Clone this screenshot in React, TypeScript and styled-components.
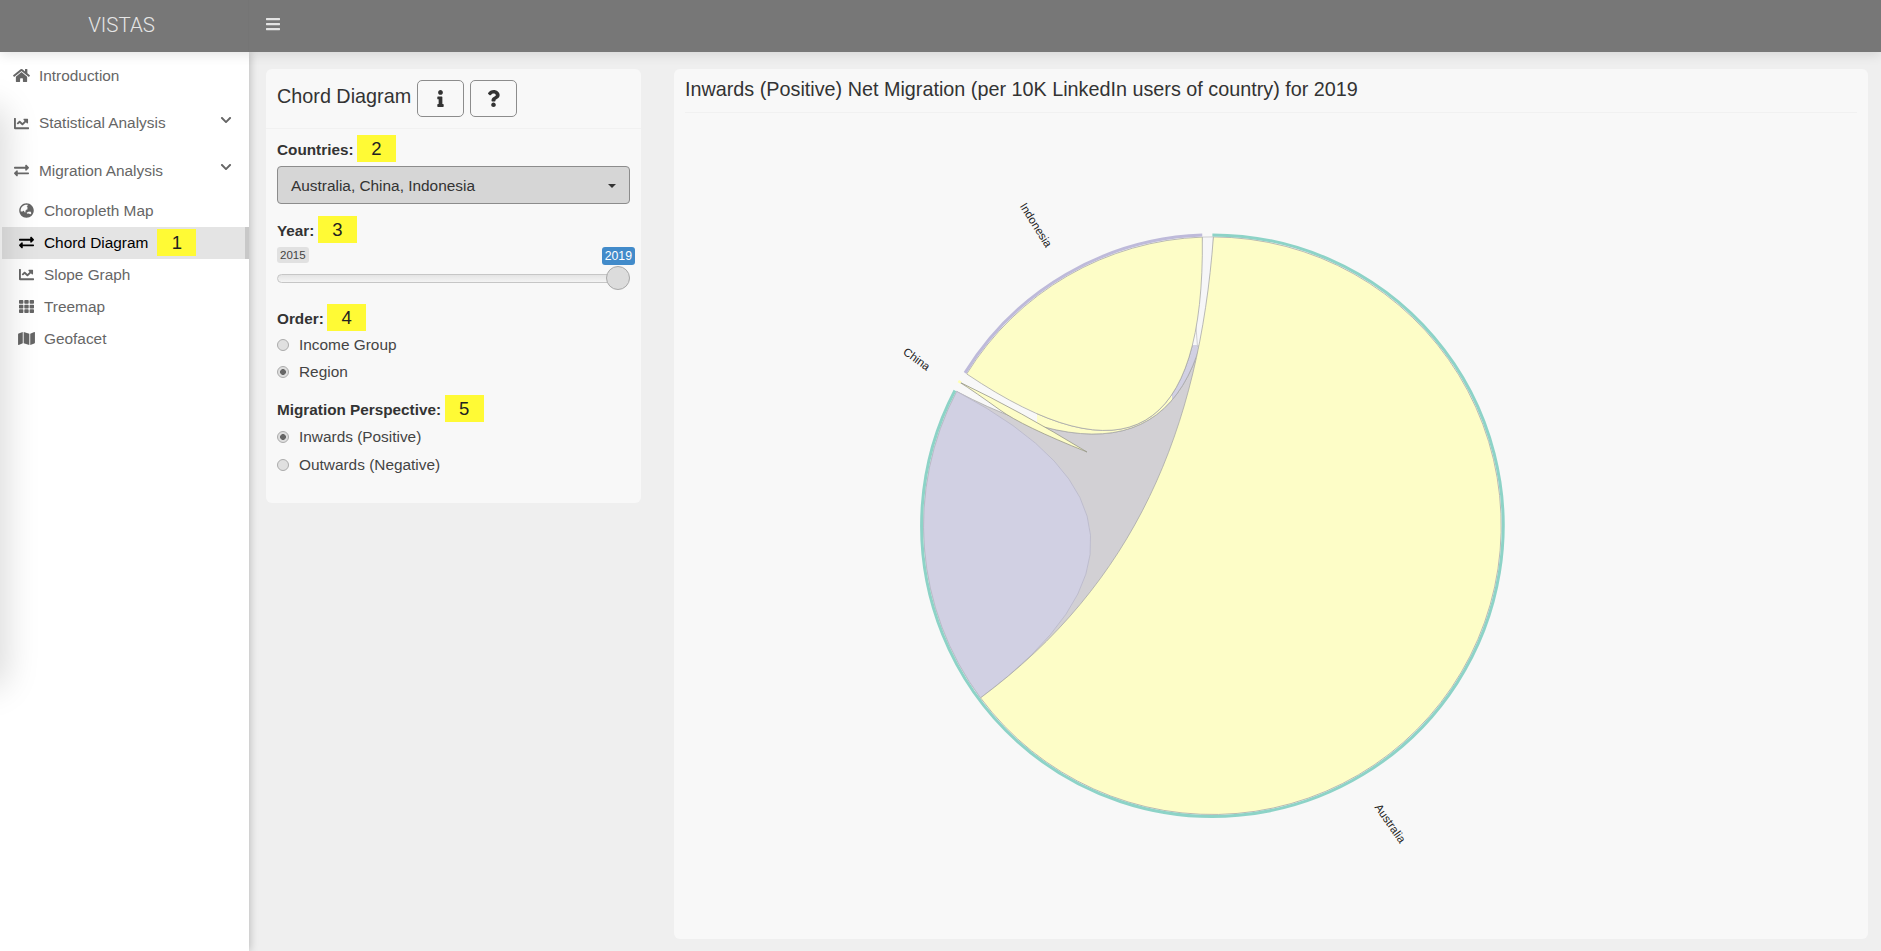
import React from "react";
import styled, { createGlobalStyle } from "styled-components";
import {
  FaBars,
  FaChartLine,
  FaChevronDown,
  FaExchangeAlt,
  FaGlobeAsia,
  FaHome,
  FaInfo,
  FaMap,
  FaQuestion,
  FaTh,
} from "react-icons/fa";

const GlobalStyle = createGlobalStyle`
  html, body { margin: 0; padding: 0; height: 100%; overflow: hidden; }
  body { font-family: "Liberation Sans", Arial, sans-serif; color: #333; background: #efefef; }
  * { box-sizing: border-box; }
`;

const Page = styled.div`
  width: 100%;
  height: 100vh;
  display: flex;
  flex-direction: column;
`;

const TopBar = styled.header`
  flex: none;
  height: 52px;
  display: flex;
  background: #777;
  position: relative;
  z-index: 3;
  box-shadow: 0 2px 12px rgba(0, 0, 0, 0.12);
`;

const Brand = styled.div`
  width: 249px;
  display: flex;
  align-items: center;
  justify-content: center;
  padding: 0 5px 3px 0;
  font-family: Roboto, "Liberation Sans", sans-serif;
  font-weight: 300;
  font-size: 20.5px;
  color: #e6e6e6;
  border-right: 1px solid #757575;
`;

const MenuToggle = styled.div`
  display: flex;
  align-items: center;
  padding: 0 0 4px 16px;
  color: #e4e4e4;
  font-size: 16px;
`;

const Content = styled.div`
  flex: 1;
  display: flex;
  min-height: 0;
`;

const Sidebar = styled.nav`
  flex: none;
  width: 249px;
  background: #fff;
  position: relative;
  z-index: 2;
  overflow: hidden;
  box-shadow: 1px 0 8px rgba(0, 0, 0, 0.22);
`;

const EdgeShade = styled.div`
  position: absolute;
  left: -30px;
  top: 60px;
  width: 30px;
  height: 570px;
  border-radius: 10px;
  box-shadow: 0 0 34px 6px rgba(0, 0, 0, 0.15);
`;

const TopItem = styled.div`
  position: relative;
  height: 47.5px;
  display: flex;
  align-items: center;
  padding-left: 12px;
  font-size: 15.4px;
  color: #666;
  svg.lead {
    width: 19px;
    height: 15px;
    margin-right: 8px;
    flex: none;
  }
`;

const Chevron = styled(FaChevronDown)`
  position: absolute;
  right: 17px;
  top: 14px;
  width: 12px;
  height: 12px;
`;

const SubItem = styled.div<{ $active?: boolean }>`
  height: 32px;
  display: flex;
  align-items: center;
  padding-left: ${(p) => (p.$active ? 16 : 18)}px;
  margin-left: ${(p) => (p.$active ? 2 : 0)}px;
  font-size: 15.4px;
  color: ${(p) => (p.$active ? "#000" : "#666")};
  background: ${(p) => (p.$active ? "#e4e4e4" : "transparent")};
  border-right: ${(p) => (p.$active ? "4px solid #c8c8c8" : "none")};
  svg {
    width: 17px;
    height: 15px;
    margin-right: 9px;
    flex: none;
  }
`;

const Marker = styled.span<{ $gap?: number }>`
  display: inline-flex;
  align-items: center;
  justify-content: center;
  width: 39px;
  height: 27px;
  margin-left: ${(p) => p.$gap ?? 3.5}px;
  background: #fffa35;
  color: #222;
  font-size: 18.5px;
  font-weight: 400;
`;

const Main = styled.main`
  flex: 1;
  display: grid;
  grid-template-columns: 375px 1194px;
  column-gap: 33px;
  align-items: start;
  padding: 17px 0 0 17px;
`;

const Panel = styled.section<{ $height: number }>`
  height: ${(p) => p.$height}px;
  background: #f8f8f8;
  border-radius: 6px;
  display: flex;
  flex-direction: column;
`;

const ControlsHead = styled.div`
  height: 60px;
  flex: none;
  display: flex;
  align-items: center;
  padding: 0 11px;
  border-bottom: 1px solid #f1f1f1;
`;

const ControlsTitle = styled.h2`
  margin: 0 6px 5px 0;
  font-size: 19.8px;
  font-weight: 400;
  color: #333;
`;

const IconButton = styled.div`
  width: 47px;
  height: 37px;
  margin: 0 6px 0 0;
  display: flex;
  align-items: center;
  justify-content: center;
  background: #f8f8f8;
  border: 1px solid #8c8c8c;
  border-radius: 5px;
  color: #333;
  svg {
    width: 17px;
    height: 17px;
  }
`;

const ControlsBody = styled.div`
  padding: 6px 11px 0;
`;

const FieldLabel = styled.div<{ $top?: number }>`
  display: flex;
  align-items: center;
  height: 27px;
  padding-top: 2px;
  margin-top: ${(p) => p.$top ?? 0}px;
  font-size: 15.3px;
  font-weight: 700;
  color: #333;
  & > span {
    margin-top: -2px;
  }
`;

const Select = styled.div`
  height: 38px;
  margin: 4px 0 0;
  width: 353px;
  display: flex;
  align-items: center;
  justify-content: space-between;
  padding: 1px 13px 0 13px;
  background: #d6d6d6;
  border: 1px solid #8c8c8c;
  border-radius: 4px;
  font-size: 15.4px;
  color: #333;
`;

const Caret = styled.span`
  width: 0;
  height: 0;
  border-left: 4.5px solid transparent;
  border-right: 4.5px solid transparent;
  border-top: 4.5px solid #333;
`;

const SliderLabels = styled.div`
  display: flex;
  justify-content: space-between;
  align-items: flex-start;
  margin: 4px -5px 0 0;
  height: 18px;
`;

const MinLabel = styled.span`
  padding: 0 3px;
  height: 16px;
  line-height: 16px;
  font-size: 11.5px;
  color: #444;
  background: #e1e1e1;
  border-radius: 3px;
`;

const MaxLabel = styled(MinLabel)`
  height: 18px;
  line-height: 18px;
  font-size: 12.3px;
  color: #fff;
  background: #428bca;
`;

const Track = styled.div`
  position: relative;
  width: 353px;
  height: 9px;
  margin-top: 9px;
  background: linear-gradient(#e4e4e4, #f4f4f4);
  border: 1px solid #c6c6c6;
  border-radius: 5px;
`;

const Handle = styled.div`
  position: absolute;
  right: -1px;
  top: -9px;
  width: 24px;
  height: 24px;
  border-radius: 50%;
  background: #dcdcdc;
  border: 1px solid #a9a9a9;
`;

const RadioRow = styled.label<{ $top?: number }>`
  display: flex;
  align-items: center;
  height: 27.5px;
  margin-top: ${(p) => p.$top ?? 0}px;
  font-size: 15.4px;
  color: #444;
`;

const RadioDot = styled.span<{ $on?: boolean }>`
  width: 12px;
  height: 12px;
  margin-right: 10px;
  border-radius: 50%;
  border: 1px solid #ababab;
  background: ${(p) =>
    p.$on ? "radial-gradient(circle, #666 0 2.6px, #dedede 3.2px)" : "#e0e0e0"};
`;

const ChartHead = styled.h3`
  flex: none;
  height: 44px;
  margin: 0 11px;
  display: flex;
  align-items: center;
  padding-bottom: 2px;
  font-size: 19.8px;
  font-weight: 400;
  color: #333;
  border-bottom: 1px solid #f1f1f1;
`;

const ChartSvg = styled.svg`
  display: block;
`;

const Label = styled.text`
  font-family: "Liberation Sans", Arial, sans-serif;
  font-size: 11.5px;
  fill: #222;
  text-anchor: middle;
  dominant-baseline: central;
`;

const Ribbon = styled.path<{ $fill: string; $edge?: string }>`
  fill: ${(p) => p.$fill};
  stroke: ${(p) => p.$edge ?? "#a8a8a8"};
  stroke-width: 0.8;
`;

const Sector = styled.path<{ $color: string }>`
  fill: none;
  stroke: ${(p) => p.$color};
  stroke-width: 3;
`;

const CX = 1212.4;
const CY = 525.7;
const RIBBON_R = 288.8;
const ARC_R = 290.8;

const polar = (deg: number, r: number = RIBBON_R) => {
  const a = (deg * Math.PI) / 180;
  return `${(CX + r * Math.sin(a)).toFixed(2)} ${(CY - r * Math.cos(a)).toFixed(2)}`;
};

const arc = (from: number, to: number) => {
  const large = to - from > 180 ? 1 : 0;
  return `M${polar(from, ARC_R)} A${ARC_R} ${ARC_R} 0 ${large} 1 ${polar(to, ARC_R)}`;
};

// ribbon edge along the rim, then back through a control point near the centre
const selfChord = (from: number, to: number, back: string) => {
  const large = to - from > 180 ? 1 : 0;
  return `M${polar(from)} A${RIBBON_R} ${RIBBON_R} 0 ${large} 1 ${polar(to)} ${back} ${polar(from)} Z`;
};

const C = `${CX} ${CY}`;
const LEAF_C = "1206 535";
const YELLOW = "#fdfdc7";
const PURPLE = "#d1d0e3";
const GREY = "#d2d0d4";

const greyRibbon = `M${polar(297.7)} Q${C} ${polar(0.2)} Q${C} ${polar(233.4)} A${RIBBON_R} ${RIBBON_R} 0 0 1 ${polar(297.7)} Z`;
const underLeaf = `M${polar(297.7)} Q${C} ${polar(0.2)} L${polar(358)} Q${LEAF_C} ${polar(301.7)} Z`;

function Chord() {
  return (
    <ChartSvg width={1194} height={826} viewBox="674 113 1194 826">
      <defs>
        <clipPath id="yellowPart">
          <rect x={1037} y={300} width={135} height={200} />
        </clipPath>
        <clipPath id="purplePart">
          <rect x={1172} y={345} width={40} height={120} />
        </clipPath>
      </defs>
      <Ribbon $fill={GREY} d={greyRibbon} />
      <g clipPath="url(#yellowPart)">
        <Ribbon $fill={YELLOW} d={underLeaf} />
      </g>
      <g clipPath="url(#purplePart)">
        <Ribbon $fill={PURPLE} d={underLeaf} />
      </g>
      <Ribbon
        $fill="#f6f6f8"
        $edge="#c4c4c8"
        d={`M${polar(358)} L${polar(0.2)} L1212 330 L1197.5 347 L1194 300 Z`}
      />
      <Ribbon $fill={PURPLE} $edge="#b9b8c8" d={selfChord(233.4, 297.7, `Q${C}`)} />
      <Ribbon $fill={YELLOW} d={selfChord(0.2, 233.4, "C1135 583 1199 429.5")} />
      <Ribbon $fill={YELLOW} d={selfChord(301.7, 358, `Q${LEAF_C}`)} />
      <Ribbon
        $fill={YELLOW}
        $edge="#98988a"
        d="M959.4 382 Q1020 411 1087 452 Q1022 426 1000 410 Q975 392 959.4 382 Z"
      />
      <Sector $color="#8dd3c7" d={arc(0, 297.7)} />
      <Sector $color="#ffffb3" d={arc(299.4, 299.9)} />
      <Sector $color="#bebada" d={arc(301.7, 358)} />
      <Label transform="translate(1036 225) rotate(58)">Indonesia</Label>
      <Label transform="translate(916.7 359) rotate(36)">China</Label>
      <Label transform="translate(1390.3 823.3) rotate(55)">Australia</Label>
    </ChartSvg>
  );
}

export default function App() {
  return (
    <Page>
      <GlobalStyle />
      <TopBar>
        <Brand>VISTAS</Brand>
        <MenuToggle>
          <FaBars />
        </MenuToggle>
      </TopBar>
      <Content>
        <Sidebar>
          <EdgeShade />
          <TopItem>
            <FaHome className="lead" />
            Introduction
          </TopItem>
          <TopItem>
            <FaChartLine className="lead" />
            Statistical Analysis
            <Chevron />
          </TopItem>
          <TopItem>
            <FaExchangeAlt className="lead" />
            Migration Analysis
            <Chevron />
          </TopItem>
          <SubItem>
            <FaGlobeAsia />
            Choropleth Map
          </SubItem>
          <SubItem $active>
            <FaExchangeAlt />
            Chord Diagram
            <Marker $gap={9}>1</Marker>
          </SubItem>
          <SubItem>
            <FaChartLine />
            Slope Graph
          </SubItem>
          <SubItem>
            <FaTh />
            Treemap
          </SubItem>
          <SubItem>
            <FaMap />
            Geofacet
          </SubItem>
        </Sidebar>
        <Main>
          <Panel $height={434}>
            <ControlsHead>
              <ControlsTitle>Chord Diagram</ControlsTitle>
              <IconButton>
                <FaInfo />
              </IconButton>
              <IconButton>
                <FaQuestion />
              </IconButton>
            </ControlsHead>
            <ControlsBody>
              <FieldLabel>
                Countries:<Marker>2</Marker>
              </FieldLabel>
              <Select>
                Australia, China, Indonesia
                <Caret />
              </Select>
              <FieldLabel $top={12}>
                Year:<Marker>3</Marker>
              </FieldLabel>
              <SliderLabels>
                <MinLabel>2015</MinLabel>
                <MaxLabel>2019</MaxLabel>
              </SliderLabels>
              <Track>
                <Handle />
              </Track>
              <FieldLabel $top={21}>
                Order:<Marker>4</Marker>
              </FieldLabel>
              <RadioRow>
                <RadioDot />
                Income Group
              </RadioRow>
              <RadioRow>
                <RadioDot $on />
                Region
              </RadioRow>
              <FieldLabel $top={9}>
                Migration Perspective:<Marker>5</Marker>
              </FieldLabel>
              <RadioRow $top={1}>
                <RadioDot $on />
                Inwards (Positive)
              </RadioRow>
              <RadioRow $top={0.5}>
                <RadioDot />
                Outwards (Negative)
              </RadioRow>
            </ControlsBody>
          </Panel>
          <Panel $height={870}>
            <ChartHead>Inwards (Positive) Net Migration (per 10K LinkedIn users of country) for 2019</ChartHead>
            <Chord />
          </Panel>
        </Main>
      </Content>
    </Page>
  );
}
